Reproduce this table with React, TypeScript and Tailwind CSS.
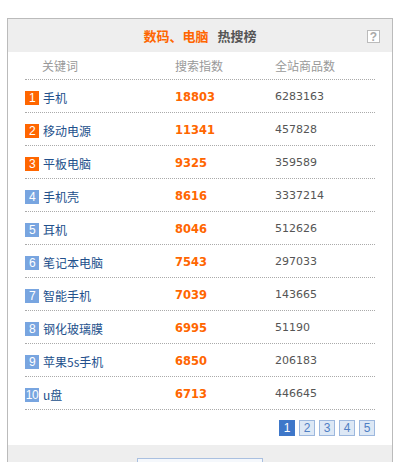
const rows = [
  { word: "手机", index: 18803, total: 6283163 },
  { word: "移动电源", index: 11341, total: 457828 },
  { word: "平板电脑", index: 9325, total: 359589 },
  { word: "手机壳", index: 8616, total: 3337214 },
  { word: "耳机", index: 8046, total: 512626 },
  { word: "笔记本电脑", index: 7543, total: 297033 },
  { word: "智能手机", index: 7039, total: 143665 },
  { word: "钢化玻璃膜", index: 6995, total: 51190 },
  { word: "苹果5s手机", index: 6850, total: 206183 },
  { word: "u盘", index: 6713, total: 446645 },
];

const cjk = "font-['Noto_Sans_CJK_SC','Noto_Sans',sans-serif]";
const num = "font-['DejaVu_Sans','Noto_Sans_CJK_SC',sans-serif]";

export default function App() {
  return (
    <div className={`h-[462px] w-[407px] overflow-hidden bg-white pl-[7px] pt-[18px] ${cjk}`}>
      <div className="w-[386px] border-x border-t border-[#bbbbbb]">
        <div className="relative flex h-[33px] items-center justify-center bg-[#eeeeee] text-[13px] font-bold">
          <span className="text-[#ff6600]">数码、电脑</span>
          <span className="ml-[9px] text-[#555555]">热搜榜</span>
          <span className="absolute right-[12px] top-[11px] flex h-[13px] w-[13px] items-center justify-center border border-[#bbbbbb] bg-white font-['Liberation_Sans',sans-serif] text-[12px] font-bold leading-none text-[#aaaaaa]">
            ?
          </span>
        </div>

        <div className="px-[17px]">
          <div className="flex h-[28px] items-center border-b border-dotted border-[#aaaaaa] text-[12px] text-[#999999]">
            <span className="w-[150px] pl-[17px]">关键词</span>
            <span className="w-[100px]">搜索指数</span>
            <span>全站商品数</span>
          </div>

          {rows.map((r, i) => (
            <div
              key={r.word}
              className="flex h-[33px] items-center border-b border-dotted border-[#aaaaaa] pt-[3px]"
            >
              <div className="flex w-[150px] items-center">
                <span
                  className={`flex h-[14px] w-[14px] items-center justify-center font-['Liberation_Sans',sans-serif] text-[12px] leading-none tracking-[-0.5px] text-white ${
                    i < 3 ? "bg-[#ff6600]" : "bg-[#78a5e0]"
                  }`}
                >
                  {i + 1}
                </span>
                <span className="ml-[4px] text-[12px] text-[#22508c]">{r.word}</span>
              </div>
              <span className={`w-[100px] ${num} text-[11.5px] font-bold text-[#ff6600]`}>
                {r.index}
              </span>
              <span className={`${num} text-[11px] text-[#555555]`}>{r.total}</span>
            </div>
          ))}

          <div className="flex justify-end gap-[4px] pb-[9px] pt-[10px]">
            {[1, 2, 3, 4, 5].map((p) => (
              <span
                key={p}
                className={`flex h-[16px] w-[16px] items-center justify-center border font-['Liberation_Sans',sans-serif] text-[12px] leading-none ${
                  p === 1
                    ? "border-[#3e77c9] bg-[#3e77c9] text-white"
                    : "border-[#9db8de] bg-[#dde8f5] text-[#4f7fc4]"
                }`}
              >
                {p}
              </span>
            ))}
          </div>
        </div>

        <div className="flex h-[40px] justify-center bg-[#eeeeee] pt-[13px]">
          <div className="ml-[-1px] h-[24px] w-[126px] border border-[#aac0e0] bg-[#f5f8fc]" />
        </div>
      </div>
    </div>
  );
}
